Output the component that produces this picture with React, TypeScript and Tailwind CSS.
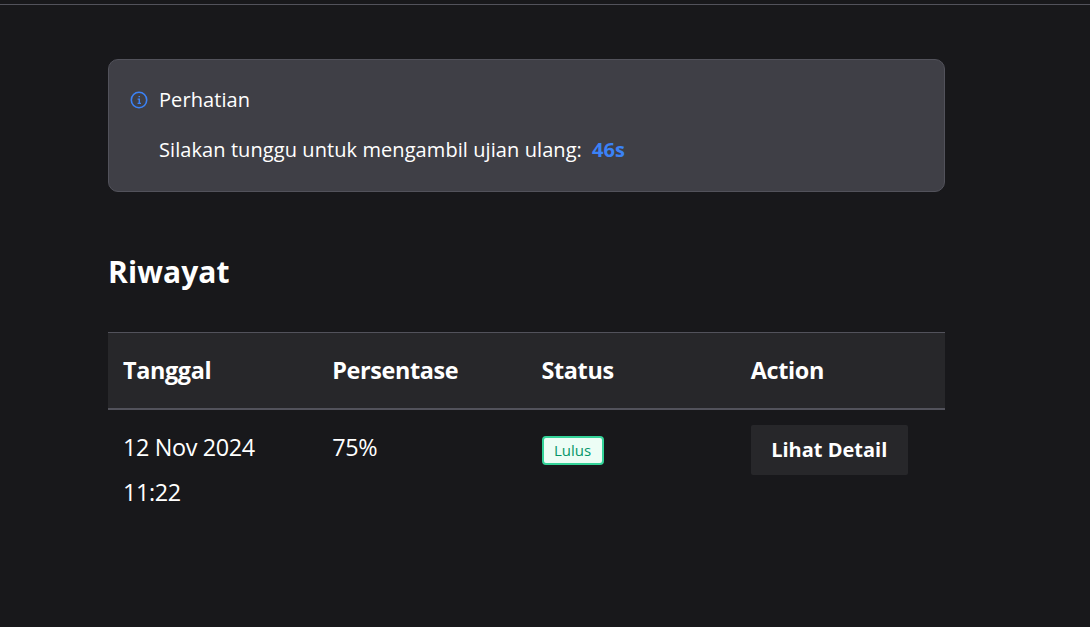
const headings = ["Tanggal", "Persentase", "Status", "Action"];

export default function App() {
  return (
    <div className="h-[627px] overflow-hidden bg-[#18181b] pt-1 font-['Open_Sans',sans-serif] text-white">
      <div className="border-t border-[#52525b]" />
      <main className="ml-[108px] w-[837px] pt-[54px]">
        <section className="flex h-[133px] rounded-[10px] border border-[#52525b] bg-[#3f3f46] pl-[21px]">
          <svg className="mt-[31px] size-[18px] shrink-0 text-[#3b82f6]" viewBox="0 0 18 18" fill="none" stroke="currentColor" strokeWidth="1.6">
            <circle cx="9" cy="9" r="7.7" />
            <path d="M7.6 8.1h1.7v4.2M7.6 12.4h3.4M8.5 5.6h1.5" strokeWidth="1.4" />
          </svg>
          <div className="ml-[11px] pt-[25px] text-[20px] leading-[30px] tracking-[0.08px]">
            <h2>Perhatian</h2>
            <p className="mt-5 whitespace-pre">Silakan tunggu untuk mengambil ujian ulang:<span className="ml-[10px] font-bold text-[#3b82f6]">46s</span></p>
          </div>
        </section>
        <h1 className="mt-[57px] text-[30px] leading-[45px] font-bold tracking-[0.1px]">Riwayat</h1>
        <table className="mt-[38px] w-full table-fixed border-collapse text-left text-[23.4px] leading-[45px] tracking-[-0.36px]">
          <thead>
            <tr className="h-[76px] border-t border-b-2 border-[#52525b] bg-[#27272a]">
              {headings.map((h) => (
                <th key={h} className="px-[15px] py-0 font-bold">{h}</th>
              ))}
            </tr>
          </thead>
          <tbody>
            <tr className="align-top">
              <td className="px-[15px] pt-[15px]">12 Nov 2024 11:22</td>
              <td className="px-[15px] pt-[15px]">75%</td>
              <td className="px-[15px] pt-[26px]">
                <span className="flex h-[29px] w-[62px] items-center justify-center rounded-[4px] border-2 border-[#34d399] bg-[#ecfdf5] text-[15px] leading-5 tracking-normal text-[#059669]">Lulus</span>
              </td>
              <td className="px-[15px] pt-[15px]">
                <button className="block h-[50px] w-[157px] rounded-[2px] bg-[#27272a] text-[20px] leading-[50px] font-bold tracking-normal">Lihat Detail</button>
              </td>
            </tr>
          </tbody>
        </table>
      </main>
    </div>
  );
}
